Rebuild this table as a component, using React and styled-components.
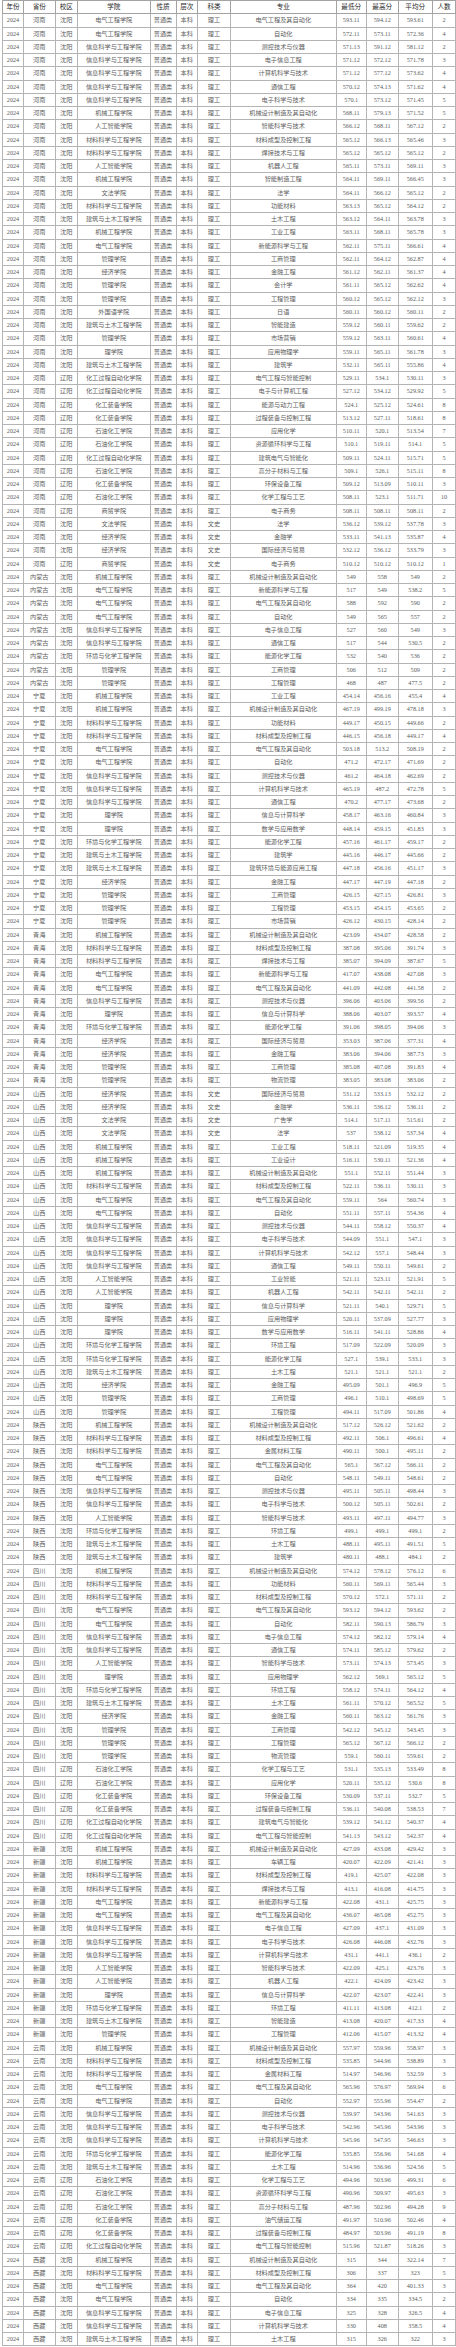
import React from 'react';
import styled, { createGlobalStyle } from 'styled-components';

const GlobalStyle = createGlobalStyle`
  html, body {
    margin: 0;
    padding: 0;
    background: #ffffff;
  }
`;

const COLUMNS = [
  { title: '年份', width: 21 },
  { title: '省份', width: 31.5 },
  { title: '校区', width: 22.5 },
  { title: '学院', width: 72.5 },
  { title: '性质', width: 26 },
  { title: '层次', width: 21.5 },
  { title: '科类', width: 33 },
  { title: '专业', width: 105.5 },
  { title: '最低分', width: 30.5 },
  { title: '最高分', width: 31.5 },
  { title: '平均分', width: 34.5 },
  { title: '人数', width: 23 },
];

// province|campus|college|kind|major|min|max|avg|count
const RAW = `
河南|沈阳|电气工程学院|理工|电气工程及其自动化|593.11|594.12|593.61|2
河南|沈阳|电气工程学院|理工|自动化|572.11|573.11|572.36|4
河南|沈阳|信息科学与工程学院|理工|测控技术与仪器|571.13|591.12|581.12|2
河南|沈阳|信息科学与工程学院|理工|电子信息工程|571.12|572.12|571.78|3
河南|沈阳|信息科学与工程学院|理工|计算机科学与技术|571.12|577.12|573.62|4
河南|沈阳|信息科学与工程学院|理工|通信工程|570.12|574.13|571.62|4
河南|沈阳|信息科学与工程学院|理工|电子科学与技术|570.1|573.12|571.45|5
河南|沈阳|机械工程学院|理工|机械设计制造及其自动化|568.11|579.13|571.52|5
河南|沈阳|人工智能学院|理工|智能科学与技术|566.12|568.11|567.12|2
河南|沈阳|材料科学与工程学院|理工|材料成型及控制工程|565.12|566.13|565.46|3
河南|沈阳|材料科学与工程学院|理工|焊接技术与工程|565.12|565.12|565.12|2
河南|沈阳|人工智能学院|理工|机器人工程|565.11|573.11|569.11|3
河南|沈阳|机械工程学院|理工|智能制造工程|564.11|569.11|566.45|3
河南|沈阳|文法学院|理工|法学|564.11|566.12|565.12|2
河南|沈阳|材料科学与工程学院|理工|功能材料|563.13|565.12|564.12|2
河南|沈阳|建筑与土木工程学院|理工|土木工程|563.12|564.11|563.78|3
河南|沈阳|机械工程学院|理工|工业工程|563.11|568.11|565.78|3
河南|沈阳|电气工程学院|理工|新能源科学与工程|562.11|575.11|566.61|4
河南|沈阳|管理学院|理工|工商管理|562.11|564.12|562.87|4
河南|沈阳|经济学院|理工|金融工程|561.12|562.11|561.37|4
河南|沈阳|管理学院|理工|会计学|561.11|565.12|562.62|4
河南|沈阳|管理学院|理工|工程管理|560.12|565.12|562.12|3
河南|沈阳|外国语学院|理工|日语|560.11|560.12|560.11|2
河南|沈阳|建筑与土木工程学院|理工|智能建造|559.12|560.11|559.62|2
河南|沈阳|管理学院|理工|市场营销|559.12|563.11|560.61|4
河南|沈阳|理学院|理工|应用物理学|559.11|565.11|561.78|3
河南|沈阳|建筑与土木工程学院|理工|建筑学|532.11|565.11|555.86|4
河南|辽阳|化工过程自动化学院|理工|电气工程与智能控制|529.11|534.1|530.11|3
河南|辽阳|化工过程自动化学院|理工|电子与计算机工程|527.12|534.12|529.92|5
河南|辽阳|化工装备学院|理工|能源与动力工程|524.1|525.12|524.61|8
河南|辽阳|化工装备学院|理工|过程装备与控制工程|513.12|527.11|518.61|8
河南|辽阳|石油化工学院|理工|应用化学|510.11|520.1|513.54|7
河南|辽阳|石油化工学院|理工|资源循环科学与工程|510.1|519.11|514.1|5
河南|辽阳|化工过程自动化学院|理工|建筑电气与智能化|509.11|524.11|515.71|5
河南|辽阳|石油化工学院|理工|高分子材料与工程|509.1|526.1|515.11|8
河南|辽阳|化工装备学院|理工|环保设备工程|509.12|513.09|510.11|3
河南|辽阳|石油化工学院|理工|化学工程与工艺|508.11|523.1|511.71|10
河南|辽阳|商贸学院|理工|电子商务|508.11|508.11|508.11|2
河南|沈阳|文法学院|文史|法学|536.12|539.12|537.78|3
河南|沈阳|经济学院|文史|金融学|533.11|541.13|535.87|4
河南|沈阳|经济学院|文史|国际经济与贸易|532.12|536.12|533.79|3
河南|辽阳|商贸学院|文史|电子商务|510.12|510.12|510.12|1
内蒙古|沈阳|机械工程学院|理工|机械设计制造及其自动化|549|558|549|2
内蒙古|沈阳|电气工程学院|理工|新能源科学与工程|517|549|538.2|5
内蒙古|沈阳|电气工程学院|理工|电气工程及其自动化|588|592|590|2
内蒙古|沈阳|电气工程学院|理工|自动化|549|565|557|2
内蒙古|沈阳|信息科学与工程学院|理工|电子信息工程|527|560|549|3
内蒙古|沈阳|信息科学与工程学院|理工|通信工程|517|544|530.5|2
内蒙古|沈阳|环境与化学工程学院|理工|能源化学工程|532|540|536|2
内蒙古|沈阳|管理学院|理工|工商管理|506|512|509|2
内蒙古|沈阳|管理学院|理工|工程管理|468|487|477.5|2
宁夏|沈阳|机械工程学院|理工|工业工程|454.14|456.16|455.4|4
宁夏|沈阳|机械工程学院|理工|机械设计制造及其自动化|467.19|499.19|478.18|3
宁夏|沈阳|材料科学与工程学院|理工|功能材料|449.17|450.15|449.66|2
宁夏|沈阳|材料科学与工程学院|理工|材料成型及控制工程|446.15|456.18|449.17|4
宁夏|沈阳|电气工程学院|理工|电气工程及其自动化|503.18|513.2|508.19|2
宁夏|沈阳|电气工程学院|理工|自动化|471.2|472.17|471.69|2
宁夏|沈阳|信息科学与工程学院|理工|测控技术与仪器|461.2|464.18|462.69|2
宁夏|沈阳|信息科学与工程学院|理工|计算机科学与技术|465.19|487.2|472.78|5
宁夏|沈阳|信息科学与工程学院|理工|通信工程|470.2|477.17|473.68|2
宁夏|沈阳|理学院|理工|信息与计算科学|458.17|463.16|460.84|3
宁夏|沈阳|理学院|理工|数学与应用数学|448.14|459.15|451.83|3
宁夏|沈阳|环境与化学工程学院|理工|能源化学工程|457.16|461.17|459.17|2
宁夏|沈阳|建筑与土木工程学院|理工|建筑学|445.16|446.17|445.66|2
宁夏|沈阳|建筑与土木工程学院|理工|建筑环境与能源应用工程|447.18|456.16|451.17|3
宁夏|沈阳|经济学院|理工|金融工程|447.17|447.19|447.18|2
宁夏|沈阳|管理学院|理工|工商管理|426.15|427.15|426.81|3
宁夏|沈阳|管理学院|理工|工程管理|453.15|454.15|453.65|2
宁夏|沈阳|管理学院|理工|市场营销|426.12|430.15|428.14|2
青海|沈阳|机械工程学院|理工|机械设计制造及其自动化|423.09|434.07|428.58|2
青海|沈阳|材料科学与工程学院|理工|材料成型及控制工程|387.08|395.06|391.74|3
青海|沈阳|材料科学与工程学院|理工|焊接技术与工程|385.07|394.09|387.67|5
青海|沈阳|电气工程学院|理工|新能源科学与工程|417.07|438.08|427.08|3
青海|沈阳|电气工程学院|理工|电气工程及其自动化|441.09|442.08|441.58|2
青海|沈阳|信息科学与工程学院|理工|测控技术与仪器|396.06|403.06|399.56|2
青海|沈阳|理学院|理工|信息与计算科学|388.06|403.07|393.57|4
青海|沈阳|环境与化学工程学院|理工|能源化学工程|391.06|398.05|394.06|3
青海|沈阳|经济学院|理工|国际经济与贸易|353.03|387.06|377.31|4
青海|沈阳|经济学院|理工|金融工程|383.06|394.06|387.73|3
青海|沈阳|管理学院|理工|工商管理|385.08|407.08|391.83|4
青海|沈阳|管理学院|理工|物流管理|383.05|383.08|383.06|2
山西|沈阳|经济学院|文史|国际经济与贸易|531.12|533.13|532.12|2
山西|沈阳|经济学院|文史|金融学|536.11|536.12|536.11|2
山西|沈阳|文法学院|文史|广告学|514.1|517.11|515.61|2
山西|沈阳|文法学院|文史|法学|537|538.12|537.34|4
山西|沈阳|机械工程学院|理工|工业工程|518.11|521.09|519.35|4
山西|沈阳|机械工程学院|理工|工业设计|516.11|530.11|521.36|4
山西|沈阳|机械工程学院|理工|机械设计制造及其自动化|551.1|552.11|551.44|3
山西|沈阳|材料科学与工程学院|理工|材料成型及控制工程|522.11|536.11|530.11|3
山西|沈阳|电气工程学院|理工|电气工程及其自动化|559.11|564|560.74|3
山西|沈阳|电气工程学院|理工|自动化|551.11|557.11|554.36|4
山西|沈阳|信息科学与工程学院|理工|测控技术与仪器|544.11|558.12|550.37|4
山西|沈阳|信息科学与工程学院|理工|电子科学与技术|544.09|551.1|547.1|3
山西|沈阳|信息科学与工程学院|理工|计算机科学与技术|542.12|557.1|548.44|3
山西|沈阳|信息科学与工程学院|理工|通信工程|549.11|550.11|549.61|2
山西|沈阳|人工智能学院|理工|工业智能|521.11|523.11|521.91|5
山西|沈阳|人工智能学院|理工|机器人工程|542.11|542.11|542.11|2
山西|沈阳|理学院|理工|信息与计算科学|521.11|540.1|529.71|5
山西|沈阳|理学院|理工|应用物理学|520.11|537.09|527.77|3
山西|沈阳|理学院|理工|数学与应用数学|516.11|541.11|528.86|4
山西|沈阳|环境与化学工程学院|理工|环境工程|517.09|522.09|520.09|3
山西|沈阳|环境与化学工程学院|理工|能源化学工程|527.1|539.1|533.1|3
山西|沈阳|建筑与土木工程学院|理工|土木工程|521.1|521.1|521.1|2
山西|沈阳|经济学院|理工|金融工程|495.09|501.1|496.9|5
山西|沈阳|管理学院|理工|工商管理|496.1|510.1|498.69|5
山西|沈阳|管理学院|理工|工程管理|494.11|517.09|501.86|4
陕西|沈阳|机械工程学院|理工|机械设计制造及其自动化|517.12|526.12|521.62|2
陕西|沈阳|材料科学与工程学院|理工|材料成型及控制工程|492.11|506.1|496.61|4
陕西|沈阳|材料科学与工程学院|理工|金属材料工程|490.11|500.1|495.11|2
陕西|沈阳|电气工程学院|理工|电气工程及其自动化|565.1|567.12|566.11|2
陕西|沈阳|电气工程学院|理工|自动化|548.11|549.11|548.61|2
陕西|沈阳|信息科学与工程学院|理工|测控技术与仪器|495.11|505.11|498.44|3
陕西|沈阳|信息科学与工程学院|理工|电子科学与技术|500.12|505.11|502.61|2
陕西|沈阳|人工智能学院|理工|智能科学与技术|493.11|497.11|494.77|3
陕西|沈阳|环境与化学工程学院|理工|环境工程|499.1|499.1|499.1|2
陕西|沈阳|建筑与土木工程学院|理工|土木工程|488.11|495.11|491.51|5
陕西|沈阳|建筑与土木工程学院|理工|建筑学|480.11|488.1|484.1|2
四川|沈阳|机械工程学院|理工|机械设计制造及其自动化|574.12|578.12|576.12|6
四川|沈阳|材料科学与工程学院|理工|功能材料|560.11|569.11|565.44|3
四川|沈阳|材料科学与工程学院|理工|材料成型及控制工程|570.12|572.1|571.11|2
四川|沈阳|电气工程学院|理工|电气工程及其自动化|593.12|594.12|593.62|2
四川|沈阳|电气工程学院|理工|自动化|582.11|590.13|586.79|3
四川|沈阳|信息科学与工程学院|理工|电子信息工程|574.12|582.12|579.14|4
四川|沈阳|信息科学与工程学院|理工|通信工程|574.11|585.12|579.62|2
四川|沈阳|人工智能学院|理工|智能科学与技术|573.11|574.13|573.45|3
四川|沈阳|理学院|理工|应用物理学|562.12|569.1|565.12|5
四川|沈阳|环境与化学工程学院|理工|环境工程|558.12|574.11|564.12|4
四川|沈阳|建筑与土木工程学院|理工|土木工程|561.11|570.12|565.52|5
四川|沈阳|经济学院|理工|金融工程|560.11|563.12|561.76|3
四川|沈阳|管理学院|理工|工商管理|542.12|545.12|543.45|3
四川|沈阳|管理学院|理工|工程管理|565.12|567.12|566.12|2
四川|沈阳|管理学院|理工|物流管理|559.1|560.11|559.61|2
四川|辽阳|石油化工学院|理工|化学工程与工艺|531.1|535.13|533.49|8
四川|辽阳|石油化工学院|理工|应用化学|520.11|535.12|530.6|8
四川|辽阳|化工装备学院|理工|环保设备工程|530.09|537.11|532.7|5
四川|辽阳|化工装备学院|理工|过程装备与控制工程|536.11|540.08|538.53|7
四川|辽阳|化工过程自动化学院|理工|建筑电气与智能化|539.12|541.12|540.37|4
四川|辽阳|化工过程自动化学院|理工|电气工程与智能控制|541.13|543.12|542.37|4
新疆|沈阳|机械工程学院|理工|机械设计制造及其自动化|427.09|433.08|429.42|3
新疆|沈阳|机械工程学院|理工|车辆工程|420.07|422.09|421.41|3
新疆|沈阳|材料科学与工程学院|理工|材料成型及控制工程|419.1|425.07|422.08|3
新疆|沈阳|材料科学与工程学院|理工|焊接技术与工程|413.1|416.08|414.75|3
新疆|沈阳|电气工程学院|理工|新能源科学与工程|422.08|431.1|425.75|3
新疆|沈阳|电气工程学院|理工|电气工程及其自动化|436.07|465.08|452.75|3
新疆|沈阳|信息科学与工程学院|理工|电子信息工程|427.09|437.1|431.09|3
新疆|沈阳|信息科学与工程学院|理工|电子科学与技术|426.08|446.08|432.76|3
新疆|沈阳|信息科学与工程学院|理工|计算机科学与技术|431.1|441.1|436.1|2
新疆|沈阳|人工智能学院|理工|智能科学与技术|422.09|425.1|423.76|3
新疆|沈阳|人工智能学院|理工|机器人工程|422.1|424.09|423.42|3
新疆|沈阳|理学院|理工|信息与计算科学|422.07|423.07|422.41|3
新疆|沈阳|环境与化学工程学院|理工|环境工程|411.11|413.08|412.1|2
新疆|沈阳|建筑与土木工程学院|理工|智能建造|413.08|420.07|417.33|4
新疆|沈阳|管理学院|理工|工程管理|412.06|415.07|413.32|4
云南|沈阳|机械工程学院|理工|机械设计制造及其自动化|557.97|559.96|558.97|3
云南|沈阳|材料科学与工程学院|理工|材料成型及控制工程|535.85|544.96|538.89|3
云南|沈阳|材料科学与工程学院|理工|金属材料工程|514.97|546.96|532.59|3
云南|沈阳|电气工程学院|理工|电气工程及其自动化|565.96|576.97|569.94|6
云南|沈阳|电气工程学院|理工|自动化|552.97|555.96|554.47|2
云南|沈阳|信息科学与工程学院|理工|测控技术与仪器|539.97|543.96|541.63|3
云南|沈阳|信息科学与工程学院|理工|电子科学与技术|542.96|545.96|543.96|3
云南|沈阳|信息科学与工程学院|理工|计算机科学与技术|545.96|547.95|546.63|3
云南|沈阳|环境与化学工程学院|理工|能源化学工程|535.85|556.96|541.68|4
云南|沈阳|建筑与土木工程学院|理工|土木工程|514.96|536.96|524.56|5
云南|辽阳|石油化工学院|理工|化学工程与工艺|494.96|503.96|499.31|6
云南|辽阳|石油化工学院|理工|资源循环科学与工程|490.96|509.97|495.63|3
云南|辽阳|石油化工学院|理工|高分子材料与工程|487.96|502.96|494.28|9
云南|辽阳|化工装备学院|理工|油气储运工程|491.97|510.96|502.46|4
云南|辽阳|化工装备学院|理工|过程装备与控制工程|484.97|503.96|491.19|8
云南|辽阳|化工过程自动化学院|理工|电气工程与智能控制|515.96|521.87|518.26|3
西藏|沈阳|机械工程学院|理工|机械设计制造及其自动化|315|344|322.14|7
西藏|沈阳|材料科学与工程学院|理工|材料成型及控制工程|306|337|323|5
西藏|沈阳|电气工程学院|理工|电气工程及其自动化|364|420|401.33|3
西藏|沈阳|电气工程学院|理工|自动化|334|335|334.5|2
西藏|沈阳|信息科学与工程学院|理工|电子信息工程|325|328|326.5|4
西藏|沈阳|信息科学与工程学院|理工|计算机科学与技术|330|408|358.5|4
西藏|沈阳|建筑与土木工程学院|理工|土木工程|315|326|322|3
`;

const rows = RAW.trim()
  .split('\n')
  .map(line => {
    const [province, campus, college, kind, major, min, max, avg, count] = line.split('|');
    return ['2024', province, campus, college, '普通类', '本科', kind, major, min, max, avg, count];
  });

const ROW_HEIGHT = 2347 / (rows.length + 1);

const Sheet = styled.table`
  width: 453px;
  margin: 0 0 0 2px;
  border-collapse: collapse;
  table-layout: fixed;
  font-family: "Liberation Serif", "Noto Sans CJK SC", serif;
  font-size: 6.2px;
  background: #ffffff;
`;

const Row = styled.tr`
  height: ${props => props.h}px;
`;

const HeadCell = styled.th`
  padding: 0;
  border: 1px solid #a3a3a3;
  text-align: center;
  vertical-align: middle;
  font-weight: 400;
  font-size: 6.6px;
  line-height: 1;
  color: #2a2a2a;
  white-space: nowrap;
  overflow: hidden;
`;

const Cell = styled.td`
  padding: 0;
  border: 1px solid #b4b4b4;
  text-align: center;
  vertical-align: middle;
  line-height: 1;
  color: #5e5e5e;
  white-space: nowrap;
  overflow: hidden;
`;

const App = () => (
  <>
    <GlobalStyle />
    <Sheet>
      <colgroup>
        {COLUMNS.map(col => (
          <col key={col.title} style={{ width: col.width }} />
        ))}
      </colgroup>
      <thead>
        <Row h={ROW_HEIGHT}>
          {COLUMNS.map(col => (
            <HeadCell key={col.title}>{col.title}</HeadCell>
          ))}
        </Row>
      </thead>
      <tbody>
        {rows.map((row, i) => (
          <Row key={i} h={ROW_HEIGHT}>
            {row.map((value, j) => (
              <Cell key={j}>{value}</Cell>
            ))}
          </Row>
        ))}
      </tbody>
    </Sheet>
  </>
);

export default App;
